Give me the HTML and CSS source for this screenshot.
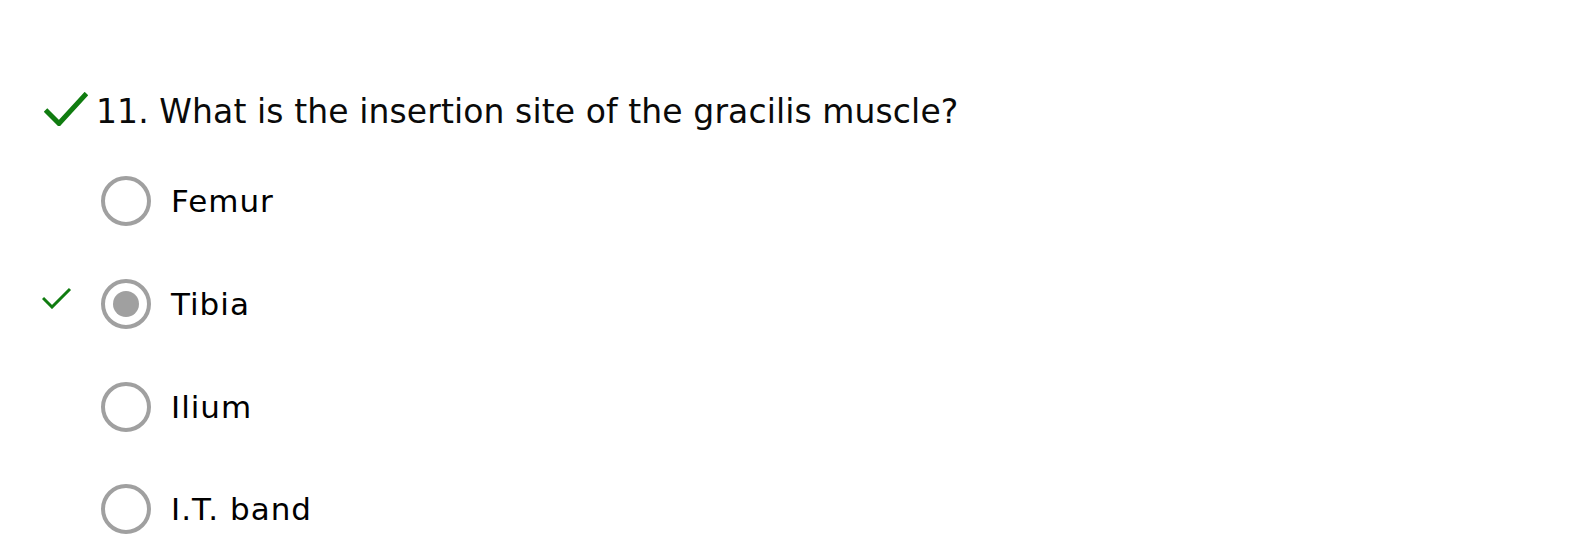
FILE: index.html
```html
<!DOCTYPE html>
<html lang="en">
<head>
<meta charset="utf-8">
<title>Quiz question</title>
<link rel="stylesheet" href="styles.css">
</head>
<body>
<section class="question">
  <div class="q-title">
    <svg class="q-check" width="44" height="34" viewBox="0 0 44 34" aria-hidden="true">
      <path d="M1.5 18 L15 31.5 L42.5 1.5" fill="none" stroke="#107c10" stroke-width="5"/>
    </svg>
    <h2 class="q-text">11. What is the insertion site of the gracilis muscle?</h2>
  </div>
  <ul class="options">
    <li class="option">
      <span class="marker"></span>
      <span class="radio"></span>
      <span class="label">Femur</span>
    </li>
    <li class="option">
      <span class="marker">
        <svg width="30" height="22" viewBox="0 0 30 22" aria-hidden="true">
          <path d="M1 11 L10 20 L28 2" fill="none" stroke="#107c10" stroke-width="3"/>
        </svg>
      </span>
      <span class="radio checked"></span>
      <span class="label">Tibia</span>
    </li>
    <li class="option">
      <span class="marker"></span>
      <span class="radio"></span>
      <span class="label">Ilium</span>
    </li>
    <li class="option">
      <span class="marker"></span>
      <span class="radio"></span>
      <span class="label">I.T. band</span>
    </li>
  </ul>
</section>
</body>
</html>
```
FILE: styles.css
```css
html, body {
  margin: 0;
  padding: 0;
  background: #ffffff;
}
body {
  font-family: "DejaVu Sans", Verdana, sans-serif;
  color: #000000;
}
.question {
  padding-top: 92px;
}
.q-title {
  display: flex;
  align-items: flex-start;
  padding-left: 44px;
  height: 38px;
}
.q-check {
  flex: none;
  margin-right: 8px;
}
.q-text {
  margin: 0;
  padding-top: 1px;
  font-weight: normal;
  font-size: 33px;
  line-height: 38px;
  letter-spacing: 0.1px;
  color: #0a0a0a;
}
.options {
  list-style: none;
  margin: 20px 0 0 0;
  padding: 0;
}
.option {
  display: flex;
  align-items: center;
  height: 102.67px;
  padding-left: 42px;
}
.marker {
  width: 59px;
  flex: none;
  display: flex;
  align-items: center;
  margin-top: -12px;
}
.radio {
  flex: none;
  width: 42px;
  height: 42px;
  border: 4px solid #a0a0a0;
  border-radius: 50%;
  display: flex;
  align-items: center;
  justify-content: center;
  margin-right: 20px;
}
.radio.checked::after {
  content: "";
  width: 26px;
  height: 26px;
  border-radius: 50%;
  background: #a0a0a0;
}
.label {
  font-size: 31px;
  line-height: 36px;
  letter-spacing: 1px;
}
```
